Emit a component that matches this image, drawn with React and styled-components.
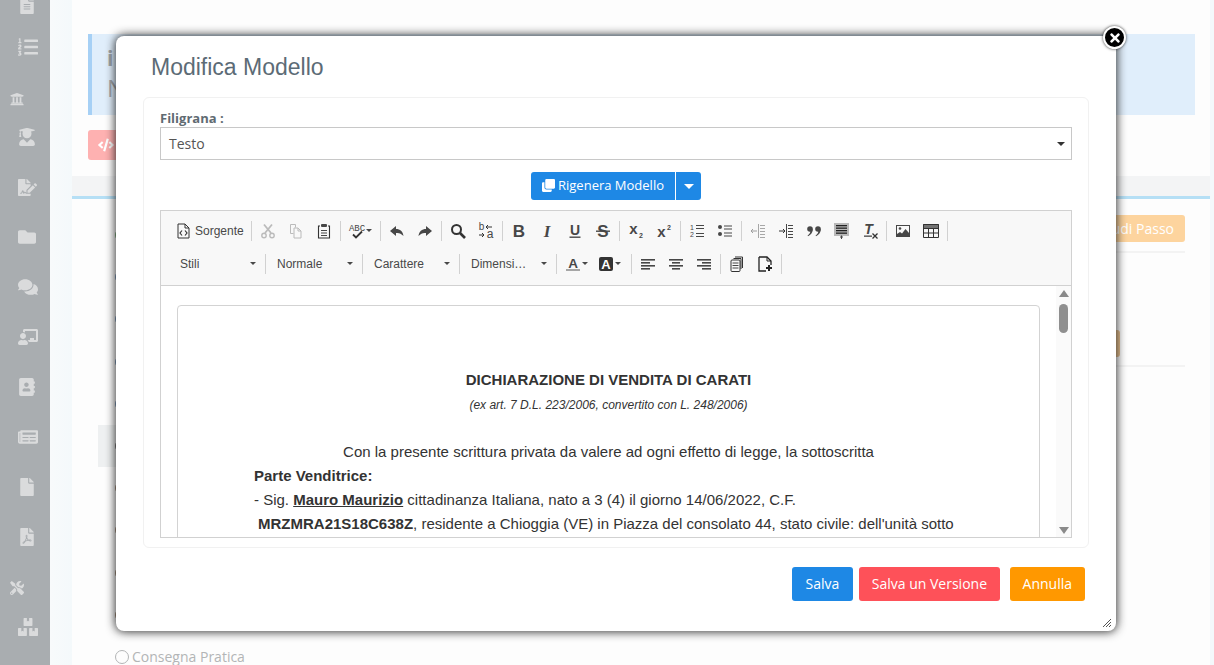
import React from "react";
import styled, { createGlobalStyle } from "styled-components";
import {
  FaFileAlt, FaListOl, FaUniversity, FaUserGraduate, FaFileSignature, FaFolder, FaComments,
  FaChalkboardTeacher, FaAddressBook, FaNewspaper, FaFile, FaFilePdf, FaTools, FaBoxes,
  FaClone, FaCode, FaTimes,
} from "react-icons/fa";

const Global = createGlobalStyle`
  html, body { margin: 0; padding: 0; height: 100%; overflow: hidden; background: #f7f8f9; }
  * { box-sizing: border-box; }
  body { font-family: "Open Sans", sans-serif; }
`;

const Shell = styled.div`
  display: flex; width: 1214px; height: 665px; overflow: hidden; position: relative;
`;
const Sidebar = styled.nav`
  width: 50px; flex: none; background: #a9adb0; display: flex; flex-direction: column; color: #dadbdc;
`;
const SideItem = styled.div`
  height: 24px; flex: none; display: flex; align-items: center;
  margin-top: ${p => p.$gap}px; padding-left: ${p => p.$indent}px; font-size: ${p => p.$size}px;
`;
const Main = styled.main`
  flex: 1; min-width: 0; padding: 0 4px 0 22px;
  background: linear-gradient(90deg, #f8fafb 0, #f4f9fb 22px, #f3f4f5 22px, #f3f4f5 1160px, #f4f8fb 1160px);
`;
const TopCard = styled.section`
  height: 176px; background: #fdfdfd; padding: 34px 15px 0 16px;
`;
const Alert = styled.div`
  height: 81px; background: #e0eefb; border-left: 4px solid #a6d0f5; padding: 9px 15px; color: #a4a6a8;
  font-size: 24px; line-height: 30px;
`;
const AlertTitle = styled.div`
  font-weight: 700; font-size: 21px; color: #9fa3a6;
`;
const CodeButton = styled.div`
  margin-top: 15px; width: 120px; height: 30px; border-radius: 3px; background: #feb1b1; color: #fff;
  display: flex; align-items: center; padding-left: 10px; font-size: 16px;
`;
const StepCard = styled.section`
  margin-top: 20px; height: 469px; background: #fdfdfd; border-top: 3px solid #b5dff5;
  display: flex; padding: 15px 25px 0 26px;
`;
const Steps = styled.ul`
  list-style: none; margin: 0; padding: 0; width: 300px; flex: none;
`;
const Step = styled.li`
  height: 42.2px; display: flex; align-items: center; padding-left: 17px; font-size: 14px; color: #b3b5b6;
  background: ${p => (p.$active ? "#eef0f1" : "transparent")};
`;
const StepDot = styled.span`
  width: 14px; height: 14px; border-radius: 50%; flex: none; margin-right: 3px;
  border: 1.5px solid ${p => p.$color};
  background: ${p => (p.$hollow ? "transparent" : p.$color)};
`;
const StepPane = styled.div`
  flex: 1; display: flex; flex-direction: column; align-items: flex-end; padding-top: 1px;
`;
const CloseStep = styled.div`
  height: 27px; border-radius: 3px; background: #fdd49e; color: #fff; font-size: 14px; line-height: 27px; padding: 0 11px;
`;
const Rule = styled.div`
  align-self: stretch; height: 2px; background: #f3f3f3; margin-top: ${p => p.$top}px;
`;
const BrownButton = styled.div`
  width: 100px; height: 27px; border-radius: 3px; background: #e8c08e; margin: 77px 65px 0 0;
`;

const Modal = styled.div`
  position: absolute; left: 116px; top: 36px; width: 1000px; height: 595px; background: #fff; border-radius: 8px;
  box-shadow: 0 0 10px 1px rgba(20,20,20,.85); padding: 0 27px; display: flex; flex-direction: column;
`;
const Title = styled.h2`
  margin: 0; padding: 16px 0 0 8px; height: 61px; font: 400 23px/30px "Liberation Sans", sans-serif; color: #5c6b76;
`;
const Panel = styled.div`
  height: 451px; border: 1px solid #f1f1f1; border-radius: 6px; padding: 11px 16px 0;
`;
const Label = styled.label`
  display: block; height: 18px; font-size: 13px; line-height: 18px; font-weight: 700; color: #5f6b72;
`;
const Select = styled.div`
  height: 33px; border: 1px solid #c8c8c8; display: flex; align-items: center; justify-content: space-between;
  padding: 0 6px 0 8px; font-size: 14px; color: #555;
`;
const Caret = styled.span`
  width: 0; height: 0; flex: none; border-left: ${p => p.$w}px solid transparent; border-right: ${p => p.$w}px solid transparent;
  border-top: ${p => p.$w}px solid ${p => p.$color || "#333"};
`;
const SplitRow = styled.div`
  display: flex; justify-content: center; margin: 12px 0 10px;
`;
const SplitMain = styled.div`
  width: 144px; height: 28px; background: #1e88e5; color: #fff; border-radius: 3px 0 0 3px; display: flex; align-items: center;
  padding: 0 0 2px 11px; gap: 3px; font-size: 13px; font-weight: 500;
`;
const SplitCaret = styled.div`
  width: 25px; height: 28px; margin-left: 1px; background: #1e88e5; border-radius: 0 3px 3px 0; display: flex; align-items: center; justify-content: center;
`;
const Editor = styled.div`
  height: 328px; border: 1px solid #d1d1d1; display: flex; flex-direction: column;
`;
const Toolbar = styled.div`
  height: 75px; flex: none; background: #f8f8f8; border-bottom: 1px solid #d1d1d1; padding: 3px 0 5px;
`;
const ToolRow = styled.div`
  height: 33px; display: flex; align-items: center; padding-left: ${p => p.$pad}px;
`;
const ToolButton = styled.div`
  width: ${p => p.$w || 28}px; height: 24px; flex: none; display: flex; align-items: center;
  padding-left: 6px; opacity: ${p => (p.$off ? 0.3 : 1)};
`;
const SourceButton = styled.div`
  width: 74px; height: 24px; flex: none; display: flex; align-items: center; gap: 4px;
  font: 12px "Liberation Sans", sans-serif; color: #484848;
`;
const Sep = styled.span`
  width: 1px; height: 20px; background: #d1d1d1; margin: 0 2px; flex: none;
`;
const Combo = styled.div`
  width: 92px; height: 24px; flex: none; display: flex; align-items: center; justify-content: space-between;
  padding: 0 7px 0 9px; font: 12px "Liberation Sans", sans-serif; color: #484848;
`;
const ArrowMark = styled.span`
  margin-left: 1px; width: 0; height: 0; flex: none; border-left: 3px solid transparent; border-right: 3px solid transparent; border-top: 3px solid #484848;
`;
const Glyph = styled.svg`
  width: 16px; height: 16px; flex: none; display: block; fill: #474747; stroke: none; overflow: visible;
`;
const EditBody = styled.div`
  flex: 1; min-height: 0; display: flex; overflow: hidden;
`;
const Canvas = styled.div`
  flex: 1; min-width: 0; padding: 19px 16px 0; overflow: hidden;
`;
const Sheet = styled.div`
  width: 863px; height: 400px; border: 1px solid #d3d3d3; border-radius: 4px; padding: 62px 76px 0;
  font: 15px/24px "Liberation Sans", sans-serif; color: #333;
`;
const Heading = styled.div`
  text-align: center; font-weight: 700;
`;
const Sub = styled.div`
  text-align: center; font-size: 12px; font-style: italic; margin-bottom: 22px; line-height: 26px;
`;
const Center = styled.div`
  text-align: center;
`;
const Under = styled.b`
  text-decoration: underline;
`;
const Fiscal = styled.b`
  margin-left: 4px;
`;
const Scroll = styled.div`
  width: 15px; flex: none; background: #fafafa; display: flex; flex-direction: column; align-items: center; padding: 4px 0 3px;
`;
const ScrollUp = styled.span`
  width: 0; height: 0; border-left: 5px solid transparent; border-right: 5px solid transparent; border-bottom: 7px solid #8a8a8a;
`;
const ScrollThumb = styled.span`
  width: 9px; height: 29px; border-radius: 5px; background: #8f8f8f; margin-top: 7px;
`;
const ScrollDown = styled.span`
  margin-top: auto; width: 0; height: 0; border-left: 5px solid transparent; border-right: 5px solid transparent; border-top: 7px solid #8a8a8a;
`;
const Footer = styled.div`
  display: flex; justify-content: flex-end; padding: 19px 4px 0 0;
`;
const Btn = styled.button`
  height: 34px; padding: 0 ${p => p.$pad}px 2px; margin-left: ${p => p.$gap}px; border: 0; border-radius: 3px; background: ${p => p.$bg};
  color: #fff; font: 400 14px "Open Sans", sans-serif;
`;
const CloseX = styled.div`
  position: absolute; right: -10px; top: -10px; width: 23px; height: 23px; border-radius: 50%; background: #000;
  border: 2px solid #fff; box-shadow: 0 0 3px rgba(0,0,0,.8); color: #fff; display: flex; align-items: center; justify-content: center; font-size: 14px;
`;
const Grip = styled.svg`
  position: absolute; right: 4px; bottom: 3px; width: 10px; height: 10px; stroke: #555; stroke-width: 1;
`;

const T = ({ x = 8, y = 13, s = 14, w = 700, i, f = "Liberation Sans", c = "#474747", children }) => (
  <text x={x} y={y} textAnchor="middle" fontSize={s} fontWeight={w} fontStyle={i ? "italic" : "normal"} fontFamily={f} fill={c}>{children}</text>
);
const lines = (arr, h = 1.4) => arr.map(([x, y, w], k) => <rect key={k} x={x} y={y} width={w} height={h} />);

const icons = {
  source: <><path d="M3 1h7l4 4v10H3z" fill="none" stroke="#333" /><path d="M10 1v4h4" fill="none" stroke="#333" /><path d="M7 7.5 5 10l2 2.5M10 7.5l2 2.5-2 2.5" fill="none" stroke="#333" strokeWidth="1.2" /></>,
  cut: <><path d="M4 1.5 11 10M12 1.5 5 10" stroke="#333" strokeWidth="1.8" fill="none" /><circle cx="4" cy="12.5" r="2.2" fill="none" stroke="#333" strokeWidth="1.4" /><circle cx="12" cy="12.5" r="2.2" fill="none" stroke="#333" strokeWidth="1.4" /></>,
  copy: <path d="M2.5 1.5h5v3M2.5 1.5v9h3M6 5h4l3 3v7H6zM10 5v3h3" fill="none" stroke="#333" />,
  paste: <><path d="M4 3H2.5v12h11V3H12" fill="none" stroke="#333" strokeWidth="1.1" /><rect x="5" y="1" width="6" height="3" rx="1" />{lines([[5, 7, 6], [5, 9.5, 6], [5, 12, 6]], 1)}</>,
  spell: <><T y={8} s={9} w={400} f="Liberation Mono">ABC</T><path d="M4 11.5 7 14.5 13 8.5" fill="none" stroke="#333" strokeWidth="1.8" /></>,
  undo: <path d="M7 3 1 8l6 5v-3c3-.5 5 .5 7.5 3C14 8.5 11 6 7 6z" />,
  redo: <path d="M9 3l6 5-6 5v-3c-3-.5-5 .5-7.5 3C2 8.5 5 6 9 6z" />,
  find: <><circle cx="6.5" cy="6.5" r="4.5" fill="none" stroke="#333" strokeWidth="2" /><path d="M10 10l5 5" stroke="#333" strokeWidth="2.6" /></>,
  replace: <><T x={3.5} y={7} s={10} w={400}>b</T><T x={12} y={15} s={12} w={400}>a</T><path d="M8 4h6M10 2 8 4l2 2M1 12h5M4 10l2 2-2 2" fill="none" stroke="#333" /></>,
  bold: <T y={13.5} s={17}>B</T>,
  italic: <T y={13.5} s={17} i f="Liberation Serif">I</T>,
  underline: <><T y={11.5} s={14}>U</T><rect x="2.5" y="13.5" width="11" height="1.4" /></>,
  strike: <><T y={14} s={17}>S</T><rect x="1" y="7.5" width="14" height="1.4" /></>,
  sub: <><T x={5.5} y={11} s={15}>x</T><T x={13} y={15} s={7}>2</T></>,
  sup: <><T x={5.5} y={14} s={15}>x</T><T x={13} y={7} s={7}>2</T></>,
  ol: <><T x={3} y={7} s={7} w={400}>1</T><T x={3} y={14} s={7} w={400}>2</T>{lines([[7, 2, 8], [7, 5, 8], [7, 10, 8], [7, 13, 8]], 1)}</>,
  ul: <><circle cx="3" cy="4" r="2" /><circle cx="3" cy="11" r="2" />{lines([[7, 2.5, 8], [7, 5.5, 8], [7, 9.5, 8], [7, 12.5, 8]], 1)}</>,
  outdent: <g opacity=".45">{lines([[10, 2, 5], [10, 5, 5], [10, 8, 5], [10, 11, 5], [10, 14, 5]], 1)}<rect x="8" y="1" width="1" height="14" /><path d="M1 8h6M3 6 1 8l2 2" fill="none" stroke="#333" /></g>,
  indent: <>{lines([[10, 2, 5], [10, 5, 5], [10, 8, 5], [10, 11, 5], [10, 14, 5]], 1)}<rect x="8" y="1" width="1" height="14" /><path d="M1 8h6M5 6l2 2-2 2" fill="none" stroke="#333" /></>,
  quote: <><circle cx="4" cy="6" r="2.8" /><path d="M6.8 6c0 3.5-2 6-4.8 7.3l-.4-.8C3.4 11.4 4.3 10 4.3 8z" /><circle cx="12" cy="6" r="2.8" /><path d="M14.8 6c0 3.5-2 6-4.8 7.3l-.4-.8c1.800-1.100 2.700-2.500 2.700-4.500z" /></>,
  div: <><rect x="0" y="0" width="15" height="13" fill="#b9b9b9" /><g fill="#222">{lines([[2, 2, 11], [2, 4.5, 11], [2, 7, 11], [2, 9.5, 11]], 1.3)}</g><rect x="6" y="13.5" width="3" height="1" /><rect x="7" y="12.5" width="1" height="3.5" /></>,
  clear: <><T x={6.5} y={11} s={14} i>T</T><rect x="2" y="12.5" width="8" height="1.3" /><path d="M10.5 10.5l5 5M15.5 10.5l-5 5" stroke="#333" strokeWidth="1.3" /></>,
  image: <><rect x="1" y="2" width="14" height="12" /><rect x="2" y="3" width="12" height="10" fill="#f8f8f8" /><circle cx="5" cy="5.5" r="1.3" /><path d="M2 13V11l3-2 2 1.5L10.5 6 14 10v3z" /></>,
  table: <><rect x="0" y="1" width="16" height="4" opacity=".75" /><path d="M.5 1.5h15v13H.5zM.5 5.5h15M.5 10h15M5.5 5v9.5M10.5 5v9.5" fill="none" stroke="#333" /></>,
  color: <><T y={11.5} s={13.5}>A</T><rect x="1" y="13" width="14" height="2" fill="#a6a6a6" /></>,
  bgcolor: <><rect x="1" y="1" width="14" height="14" rx="2" fill="#333" /><T y={13} s={13} c="#fff">A</T></>,
  left: <>{lines([[1, 3, 14], [1, 6, 9], [1, 9, 14], [1, 12, 9]], 1.6)}</>,
  center: <>{lines([[1, 3, 14], [4, 6, 8], [1, 9, 14], [4, 12, 8]], 1.6)}</>,
  right: <>{lines([[1, 3, 14], [6, 6, 9], [1, 9, 14], [6, 12, 9]], 1.6)}</>,
  templates: <><path d="M6 1h7.5v11M4.5 2.5H12V13" fill="none" stroke="#333" /><rect x="2" y="4" width="9" height="11.5" rx="1" fill="#f8f8f8" stroke="#333" />{lines([[3.5, 6.5, 6], [3.5, 9, 6], [3.5, 11.5, 6]], 1)}</>,
  newpage: <><path d="M2 1h8l4 4v4M2 1v14h7" fill="none" stroke="#222" strokeWidth="1.3" /><path d="M10 1v4h4" fill="none" stroke="#222" /><path d="M12 9v6M9 12h6" stroke="#222" strokeWidth="2" /></>,
};

const Icon = ({ n }) => <Glyph viewBox="0 0 16 16">{icons[n]}</Glyph>;
const Tool = ({ n, off }) => <ToolButton $off={off}><Icon n={n} /></ToolButton>;
const Drop = ({ n, w = 37 }) => <ToolButton $w={w}><Icon n={n} /><ArrowMark /></ToolButton>;

const sideItems = [
  [FaFileAlt, -7, 18, 18], [FaListOl, 18, 18, 20], [FaUniversity, 28, 10, 14], [FaUserGraduate, 14, 18, 18],
  [FaFileSignature, 26, 18, 19], [FaFolder, 26, 18, 18], [FaComments, 26, 18, 20], [FaChalkboardTeacher, 26, 18, 20],
  [FaAddressBook, 26, 18, 18], [FaNewspaper, 26, 18, 20], [FaFile, 26, 18, 18], [FaFilePdf, 26, 18, 18],
  [FaTools, 27, 10, 14], [FaBoxes, 15, 18, 20],
];
const stepColors = ["#7fb27f", "#7d9cc0", "#7d9cc0", "#7d9cc0", "#7d9cc0", "#777", "#a8917c", "#a8917c", "#a8917c", "#a8917c"];

export default function App() {
  return (
    <Shell>
      <Global />
      <Sidebar>
        {sideItems.map(([I, gap, indent, size], k) => (
          <SideItem key={k} $gap={gap} $indent={indent} $size={size}><I /></SideItem>
        ))}
      </Sidebar>
      <Main>
        <TopCard>
          <Alert>
            <AlertTitle>i</AlertTitle>
            N
          </Alert>
          <CodeButton><FaCode /></CodeButton>
        </TopCard>
        <StepCard>
          <Steps>
            {stepColors.map((c, k) => (
              <Step key={k} $active={k === 5}><StepDot $color={c} /></Step>
            ))}
            <Step><StepDot $color="#b3b5b6" $hollow />Consegna Pratica</Step>
          </Steps>
          <StepPane>
            <CloseStep>Chiudi Passo</CloseStep>
            <Rule $top={9} />
            <BrownButton />
            <Rule $top={8} />
          </StepPane>
        </StepCard>
      </Main>

      <Modal>
        <CloseX><FaTimes /></CloseX>
        <Title>Modifica Modello</Title>
        <Panel>
          <Label>Filigrana :</Label>
          <Select>Testo<Caret $w={4} /></Select>
          <SplitRow>
            <SplitMain><FaClone size={13} />Rigenera Modello</SplitMain>
            <SplitCaret><Caret $w={5} $color="#fff" /></SplitCaret>
          </SplitRow>
          <Editor>
            <Toolbar>
              <ToolRow $pad={14}>
                <SourceButton><Icon n="source" />Sorgente</SourceButton>
                <Sep />
                <Tool n="cut" off /><Tool n="copy" off /><Tool n="paste" />
                <Sep />
                <Drop n="spell" w={35} />
                <Sep />
                <Tool n="undo" /><Tool n="redo" />
                <Sep />
                <Tool n="find" /><Tool n="replace" />
                <Sep />
                <Tool n="bold" /><Tool n="italic" /><Tool n="underline" /><Tool n="strike" />
                <Sep />
                <Tool n="sub" /><Tool n="sup" />
                <Sep />
                <Tool n="ol" /><Tool n="ul" />
                <Sep />
                <Tool n="outdent" /><Tool n="indent" /><Tool n="quote" /><Tool n="div" /><Tool n="clear" />
                <Sep />
                <Tool n="image" /><Tool n="table" />
                <Sep />
              </ToolRow>
              <ToolRow $pad={10}>
                <Combo>Stili<ArrowMark /></Combo><Sep />
                <Combo>Normale<ArrowMark /></Combo><Sep />
                <Combo>Carattere<ArrowMark /></Combo><Sep />
                <Combo>Dimensi…<ArrowMark /></Combo><Sep />
                <Drop n="color" w={33} /><Drop n="bgcolor" />
                <Sep />
                <Tool n="left" /><Tool n="center" /><Tool n="right" />
                <Sep />
                <Tool n="templates" /><Tool n="newpage" />
                <Sep />
              </ToolRow>
            </Toolbar>
            <EditBody>
              <Canvas>
                <Sheet>
                  <Heading>DICHIARAZIONE DI VENDITA DI CARATI</Heading>
                  <Sub>(ex art. 7 D.L. 223/2006, convertito con L. 248/2006)</Sub>
                  <Center>Con la presente scrittura privata da valere ad ogni effetto di legge, la sottoscritta</Center>
                  <b>Parte Venditrice:</b>
                  <div>- Sig. <Under>Mauro Maurizio</Under> cittadinanza Italiana, nato a 3 (4) il giorno 14/06/2022, C.F. <Fiscal>MRZMRA21S18C638Z</Fiscal>, residente a Chioggia (VE) in Piazza del consolato 44, stato civile: dell'unità sotto meglio descritta,</div>
                </Sheet>
              </Canvas>
              <Scroll><ScrollUp /><ScrollThumb /><ScrollDown /></Scroll>
            </EditBody>
          </Editor>
        </Panel>
        <Footer>
          <Btn $bg="#1e88e5" $pad={14}>Salva</Btn>
          <Btn $bg="#fe5159" $pad={12.5} $gap={6}>Salva un Versione</Btn>
          <Btn $bg="#ff9800" $pad={13} $gap={10}>Annulla</Btn>
        </Footer>
        <Grip viewBox="0 0 10 10"><path d="M9 1 1 9M9 4 4 9M9 7 7 9" /></Grip>
      </Modal>
    </Shell>
  );
}
